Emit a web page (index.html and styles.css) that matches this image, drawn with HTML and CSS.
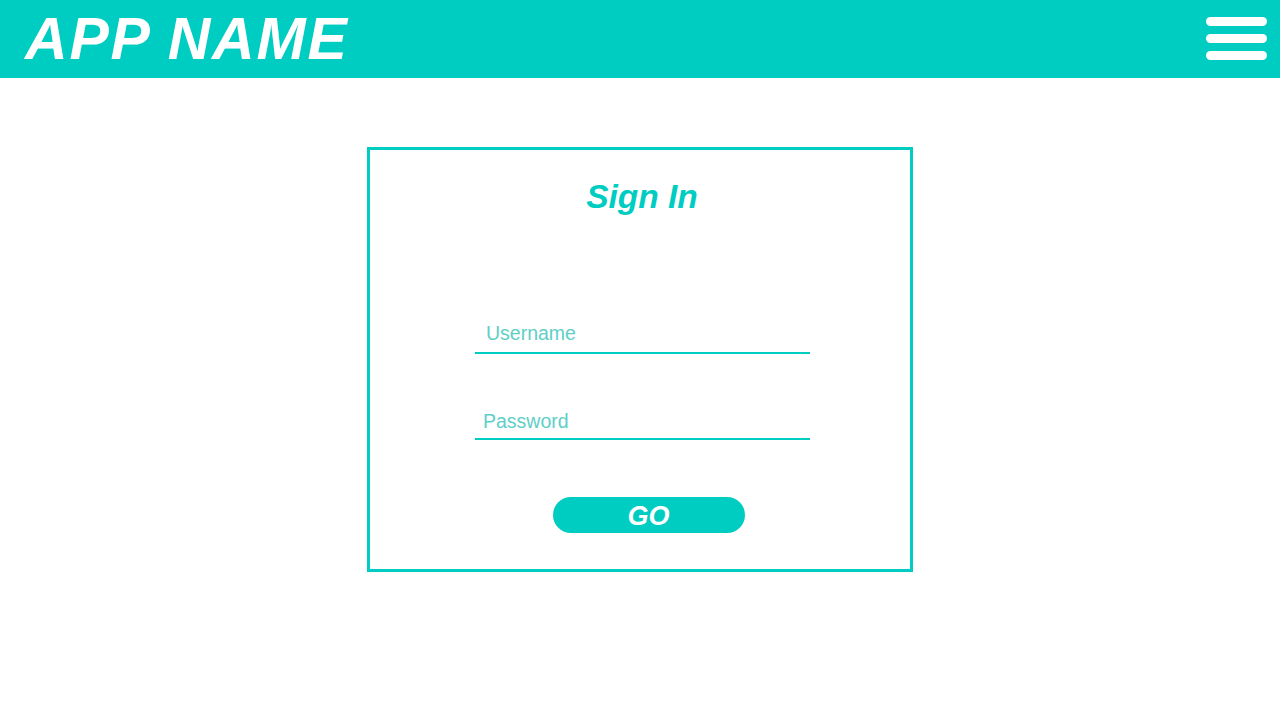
FILE: index.html
```html
<!DOCTYPE html>
<html>
<head>
<meta charset="utf-8">
<link rel="stylesheet" href="styles.css">
</head>
<body>
<header class="topbar">
  <h1 class="app-name">APP NAME</h1>
  <div class="menu" aria-label="menu">
    <span class="bar"></span>
    <span class="bar"></span>
    <span class="bar"></span>
  </div>
</header>
<main class="main">
  <form class="card">
    <h2 class="title">Sign In</h2>
    <div class="field field-user"><input type="text" placeholder="Username"></div>
    <div class="field field-pass"><input type="password" placeholder="Password"></div>
    <button type="button" class="go">GO</button>
  </form>
</main>
</body>
</html>
```
FILE: styles.css
```css
* { box-sizing: border-box; }
html, body { margin: 0; padding: 0; background: #ffffff; }
body { font-family: "Liberation Sans", Arial, sans-serif; }
.topbar {
  height: 78px;
  background: #00cdc1;
  display: flex;
  align-items: flex-start;
  justify-content: space-between;
  padding: 0 13px 0 25px;
}
.app-name {
  margin: 6px 0 0 0;
  color: #ffffff;
  font-family: "Liberation Sans", Arial, sans-serif;
  font-weight: 700;
  font-style: italic;
  font-size: 59px;
  line-height: 66px;
  letter-spacing: 1.8px;
  white-space: nowrap;
}
.menu {
  display: flex;
  flex-direction: column;
  gap: 8px;
  width: 61px;
  margin-top: 17px;
}
.bar {
  display: block;
  height: 9px;
  background: #ffffff;
  border-radius: 4.5px;
}
.main {
  display: flex;
  justify-content: center;
  padding-top: 69px;
}
.card {
  width: 546px;
  height: 425px;
  border: 3px solid #00cdc1;
  display: flex;
  flex-direction: column;
  align-items: center;
}
.title {
  margin: 27px 0 0 4px;
  color: #00cdc1;
  font-family: "Liberation Sans", Arial, sans-serif;
  font-weight: 700;
  font-style: italic;
  font-size: 33.5px;
  line-height: 40px;
}
.field {
  width: 335px;
  margin-left: 5px;
  border-bottom: 2px solid #00cdc1;
}
.field-user { margin-top: 99px; }
.field-pass { margin-top: 48px; }
.field input {
  display: block;
  width: 100%;
  height: 36px;
  border: 0;
  outline: none;
  background: transparent;
  font-family: "Liberation Sans", Arial, sans-serif;
  font-size: 19.5px;
  color: #3cc9bf;
}
.field-user input { padding: 0 0 2px 11px; }
.field-pass input { padding: 3px 0 0 8px; }
.field input::placeholder { color: #5ecfc6; opacity: 1; }
.go {
  margin-top: 57px;
  margin-left: 17px;
  width: 192px;
  height: 36px;
  border: 0;
  border-radius: 18px;
  background: #00cdc1;
  color: #ffffff;
  font-family: "Liberation Sans", Arial, sans-serif;
  font-weight: 700;
  font-style: italic;
  font-size: 27px;
  line-height: 33px;
  padding: 3px 0 0 0;
}
```
